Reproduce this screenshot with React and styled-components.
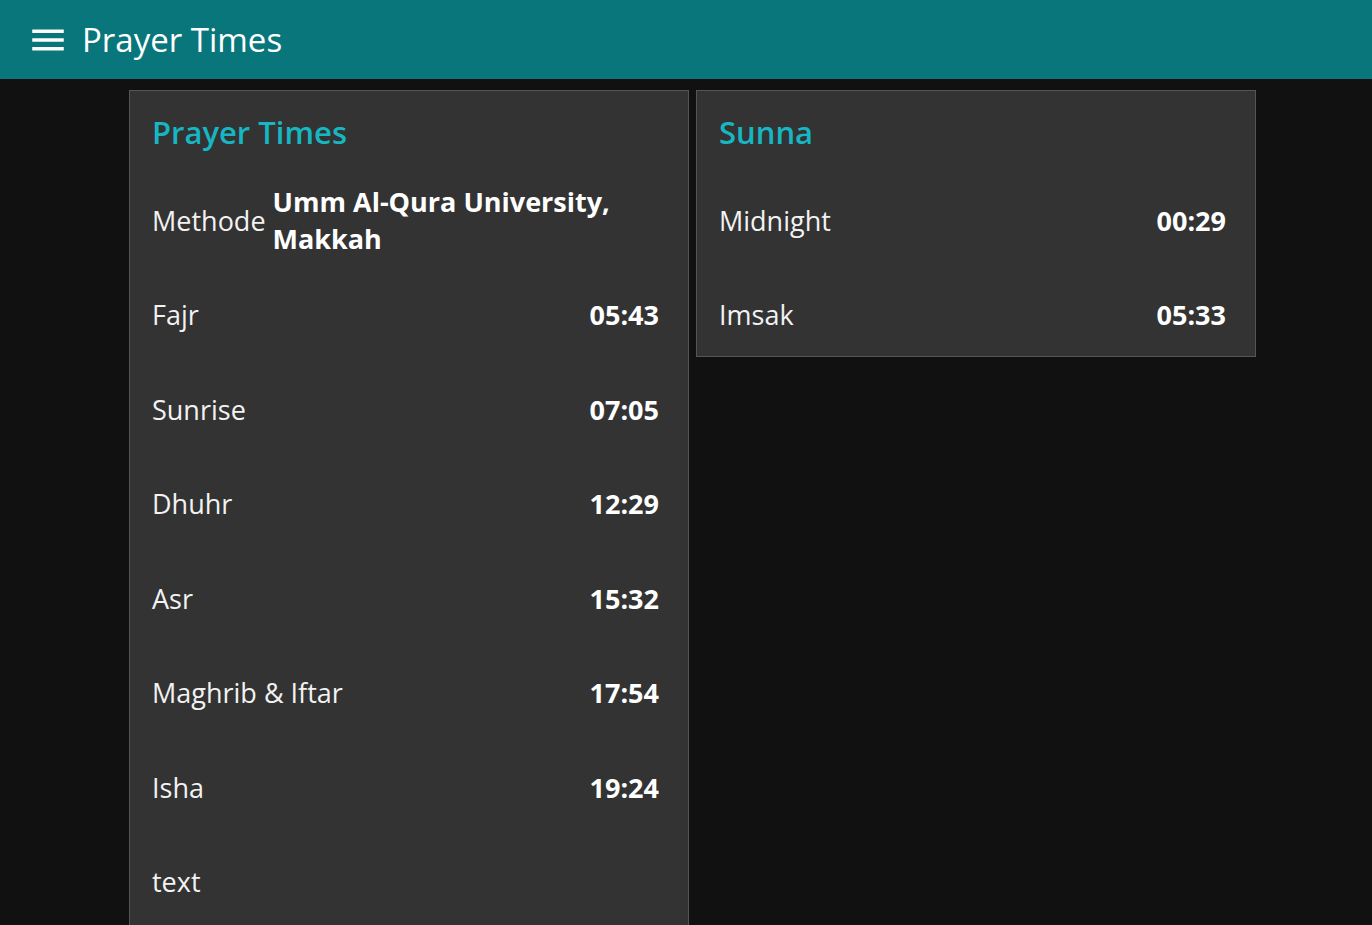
import React from 'react';
import styled, { createGlobalStyle } from 'styled-components';

const GlobalStyle = createGlobalStyle`
  html, body {
    margin: 0;
    padding: 0;
    background: #111111;
    font-family: "Open Sans", "Noto Sans", sans-serif;
    color: #f2f2f2;
  }
  * {
    box-sizing: border-box;
  }
`;

const prayers = [
  { name: 'Fajr', time: '05:43' },
  { name: 'Sunrise', time: '07:05' },
  { name: 'Dhuhr', time: '12:29' },
  { name: 'Asr', time: '15:32' },
  { name: 'Maghrib & Iftar', time: '17:54' },
  { name: 'Isha', time: '19:24' },
  { name: 'text', time: '' },
];

const sunna = [
  { name: 'Midnight', time: '00:29' },
  { name: 'Imsak', time: '05:33' },
];

const AppBar = styled.header`
  display: flex;
  align-items: center;
  gap: 13px;
  height: 79px;
  padding-left: 27px;
  background: #08767a;
  color: #ffffff;
`;

const MenuButton = styled.button`
  display: flex;
  padding: 0;
  border: 0;
  background: none;
  color: #ffffff;
  cursor: pointer;
`;

const AppTitle = styled.h1`
  margin: 0;
  font-size: 33px;
  font-weight: 400;
  line-height: 1;
`;

const Content = styled.main`
  display: flex;
  align-items: flex-start;
  gap: 7px;
  padding: 11px 0 0 129px;
`;

const Card = styled.section`
  width: 560px;
  padding: 0 29px ${(p) => (p.$extended ? '24px' : '0')} 22px;
  background: #333333;
  border: 1px solid #555555;
`;

const CardTitle = styled.h2`
  display: flex;
  align-items: center;
  height: 76px;
  margin: 0;
  padding-top: 6px;
  font-size: 31px;
  font-weight: 600;
  color: #16b6c2;
`;

const Row = styled.div`
  display: flex;
  align-items: center;
  justify-content: ${(p) => (p.$stacked ? 'flex-start' : 'space-between')};
  gap: 7px;
  height: 94.5px;
  padding-top: 12px;
  font-size: 27px;
`;

const Label = styled.span`
  color: #f2f2f2;
  white-space: nowrap;
`;

const Value = styled.span`
  font-weight: 700;
  color: #ffffff;
`;

const MenuIcon = () => (
  <svg width="42" height="42" viewBox="0 0 24 24" fill="currentColor">
    <path d="M3 18h18v-2H3v2zm0-5h18v-2H3v2zm0-7v2h18V6H3z" />
  </svg>
);

const TimesCard = ({ title, children, rows, extended }) => (
  <Card $extended={extended}>
    <CardTitle>{title}</CardTitle>
    {children}
    {rows.map((r) => (
      <Row key={r.name}>
        <Label>{r.name}</Label>
        <Value>{r.time}</Value>
      </Row>
    ))}
  </Card>
);

export default function App() {
  return (
    <>
      <GlobalStyle />
      <AppBar>
        <MenuButton aria-label="menu">
          <MenuIcon />
        </MenuButton>
        <AppTitle>Prayer Times</AppTitle>
      </AppBar>
      <Content>
        <TimesCard title="Prayer Times" rows={prayers} extended>
          <Row $stacked>
            <Label>Methode</Label>
            <Value>Umm Al-Qura University, Makkah</Value>
          </Row>
        </TimesCard>
        <TimesCard title="Sunna" rows={sunna} />
      </Content>
    </>
  );
}
